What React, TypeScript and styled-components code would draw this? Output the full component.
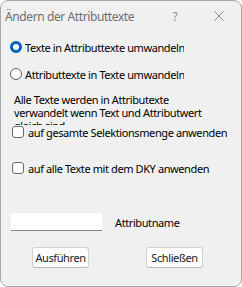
import React from 'react';
import styled, { createGlobalStyle } from 'styled-components';

const GlobalStyle = createGlobalStyle`
  html, body {
    margin: 0;
    padding: 0;
    background: #ffffff;
  }
  body {
    font-family: 'Noto Sans', 'Open Sans', sans-serif;
    font-size: 11px;
    letter-spacing: -0.4px;
    color: #000;
  }
`;

const Window = styled.div`
  box-sizing: border-box;
  width: 242px;
  height: 287px;
  background: #f0f0f0;
  border: 1px solid #a8a8a8;
  border-radius: 8px;
  overflow: hidden;
  display: flex;
  flex-direction: column;
`;

const TitleBar = styled.div`
  height: 30px;
  display: flex;
  align-items: center;
  padding-left: 4px;
  color: #6e6e6e;
  font-size: 12px;
  letter-spacing: -0.4px;
`;

const Title = styled.span`
  flex: 1;
`;

const TitleButton = styled.span`
  width: 44px;
  display: flex;
  justify-content: center;
  color: #909090;
`;

const Body = styled.div`
  display: flex;
  flex-direction: column;
  padding: 8px 0 0 9px;
`;

const OptionRow = styled.label`
  display: flex;
  align-items: center;
  gap: 3px;
  height: 16px;
  white-space: nowrap;
  overflow: hidden;
  width: 174px;
  margin-bottom: 11px;
`;

const Radio = styled.span<{ $checked?: boolean }>`
  box-sizing: border-box;
  width: 12px;
  height: 12px;
  border-radius: 50%;
  flex: none;
  border: ${(p) => (p.$checked ? '3.5px solid #005fb8' : '1px solid #5d5d5d')};
  background: #fff;
`;

const Info = styled.div`
  margin: 0 0 0 4px;
  width: 198px;
  height: 32px;
  line-height: 13px;
  overflow: hidden;
`;

const CheckRow = styled.label<{ $gap: number }>`
  display: flex;
  align-items: center;
  gap: 4px;
  margin: 0 0 0 2px;
  height: 14px;
  margin-bottom: ${(p) => p.$gap}px;
  white-space: nowrap;
`;

const Box = styled.span`
  box-sizing: border-box;
  width: 12px;
  height: 12px;
  flex: none;
  border: 1px solid #6a6a6a;
  border-radius: 3px;
  background: #fff;
`;

const FieldRow = styled.div`
  display: flex;
  align-items: center;
  gap: 13px;
  margin-left: 1px;
`;

const Field = styled.div`
  box-sizing: border-box;
  width: 91px;
  height: 18px;
  background: #fff;
  border-radius: 2px 2px 0 0;
  border-bottom: 1px solid #868686;
`;

const ButtonRow = styled.div`
  display: flex;
  gap: 57px;
  margin: 16px 0 0 22px;
`;

const Button = styled.button`
  box-sizing: border-box;
  width: 57px;
  height: 21px;
  padding: 0;
  font: inherit;
  letter-spacing: inherit;
  color: #1a1a1a;
  background: #fdfdfd;
  border: 1px solid #d0d0d0;
  border-bottom-color: #b8b8b8;
  border-radius: 3px;
`;

export default function App() {
  return (
    <>
      <GlobalStyle />
      <Window>
        <TitleBar>
          <Title>Ändern der Attributtexte</Title>
          <TitleButton>?</TitleButton>
          <TitleButton>
            <svg width="10" height="10" viewBox="0 0 10 10">
              <path d="M0.5 0.5 L9.5 9.5 M9.5 0.5 L0.5 9.5" stroke="#8c8c8c" strokeWidth="1" fill="none" />
            </svg>
          </TitleButton>
        </TitleBar>
        <Body>
          <OptionRow>
            <Radio $checked />
            Texte in Attributtexte umwandeln
          </OptionRow>
          <OptionRow>
            <Radio />
            Attributtexte in Texte umwandeln
          </OptionRow>
          <Info>
            Alle Texte werden in Attributexte verwandelt wenn Text und Attributwert
            gleich sind
          </Info>
          <CheckRow $gap={22}>
            <Box />
            auf gesamte Selektionsmenge anwenden
          </CheckRow>
          <CheckRow $gap={38}>
            <Box />
            auf alle Texte mit dem DKY anwenden
          </CheckRow>
          <FieldRow>
            <Field />
            Attributname
          </FieldRow>
          <ButtonRow>
            <Button>Ausführen</Button>
            <Button>Schließen</Button>
          </ButtonRow>
        </Body>
      </Window>
    </>
  );
}
